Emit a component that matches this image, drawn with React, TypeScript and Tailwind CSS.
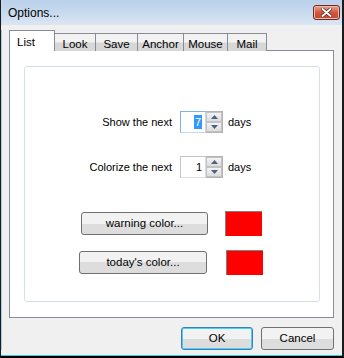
import React from "react";

const font = { fontFamily: '"Liberation Sans", Arial, sans-serif' };

function Spin({ value, focused }: { value: string; focused?: boolean }) {
  return (
    <div className="flex h-[22px]">
      <div
        className={`flex h-[22px] w-[26px] items-center justify-end border bg-white pr-[3px] ${
          focused ? "border-[#7eb4ea] border-r-[#c5d9ef] border-b-[#c5d9ef]" : "border-[#dbdbdb] border-l-[#c4c4c4] border-t-[#c4c4c4]"
        }`}
      >
        {focused ? (
          <span className="bg-[#3399ff] px-[1px] leading-[14px] text-white">{value}</span>
        ) : (
          <span className="leading-[14px] text-black">{value}</span>
        )}
      </div>
      <div className="flex w-[17px] flex-col border border-l-0 border-[#b3b3b3]">
        <div className="flex h-[10px] items-center justify-center border border-[#c3c3c3] bg-gradient-to-b from-[#f4f4f4] to-[#dcdcdc]">
          <svg width="7" height="4" viewBox="0 0 7 4">
            <path d="M3.5 0 L7 4 L0 4 Z" fill="#4d6185" />
          </svg>
        </div>
        <div className="flex h-[10px] items-center justify-center border border-[#c3c3c3] bg-gradient-to-b from-[#f4f4f4] to-[#dcdcdc]">
          <svg width="7" height="4" viewBox="0 0 7 4">
            <path d="M0 0 L7 0 L3.5 4 Z" fill="#4d6185" />
          </svg>
        </div>
      </div>
    </div>
  );
}

function Btn({ label, w, focus }: { label: string; w: string; focus?: boolean }) {
  return (
    <div
      className={`flex h-[23px] ${w} items-center justify-center rounded-[3px] border ${
        focus ? "border-[#3c7fb1] shadow-[inset_0_0_0_1px_#48d0f8]" : "border-[#707070]"
      } bg-gradient-to-b from-[#f2f2f2] from-50% to-[#dddddd] to-50% text-[11.5px] text-black`}
    >
      <span>{label}</span>
    </div>
  );
}

export default function App() {
  const tabs = ["Look", "Save", "Anchor", "Mouse", "Mail"];
  const tabW = ["w-[41px]", "w-[42px]", "w-[46px]", "w-[44px]", "w-[39px]"];
  return (
    <div
      className="relative h-[358px] w-[344px] overflow-hidden border-b-[2px] border-l border-r-[2px] border-[#1c1c1c] border-b-black bg-[#f0f0f0] text-[11px]"
      style={font}
    >
      {/* title bar */}
      <div className="flex h-[25px] items-start justify-between border-l border-[#c3d7ee] bg-gradient-to-b from-[#b9d1ea] via-[#c7daee] to-[#dbe6f3] pl-[6px]">
        <span className="mt-[6px] text-[12px] leading-[14px] text-black">Options...</span>
        <div className="mr-[2px] mt-[5px] flex h-[15px] w-[27px] items-center justify-center rounded-[3px] border border-[#6d2a23] bg-gradient-to-b from-[#e8a593] via-[#d1563d] to-[#c64630] shadow-[inset_0_0_0_1px_#f0b8a8]">
          <svg width="11" height="9" viewBox="0 0 11 9">
            <path d="M1.5 1 L9.5 8 M9.5 1 L1.5 8" stroke="#3a1a14" strokeWidth="3.2" strokeLinecap="round" />
            <path d="M1.5 1 L9.5 8 M9.5 1 L1.5 8" stroke="#ffffff" strokeWidth="2" strokeLinecap="round" />
          </svg>
        </div>
      </div>
      <div className="border-l border-[#a9c9ea] pl-[7px] pr-[7px]">
        {/* tabs */}
        <div className="relative z-10 mt-[5px] flex h-[21px] items-end">
          <div className="flex h-[21px] w-[46px] items-start border border-b-0 border-[#898c95] bg-white pl-[7px] pt-[3px] text-[11.5px] text-black">
            List
          </div>
          {tabs.map((t, i) => (
            <div
              key={t}
              className={`flex h-[18px] ${tabW[i]} items-start justify-center border border-b-0 border-l-0 border-[#898c95] bg-gradient-to-b from-[#f2f2f2] from-45% to-[#d7d7d7] to-55% pt-[2px] text-[11.5px] text-black`}
            >
              {t}
            </div>
          ))}
        </div>
        {/* panel */}
        <div className="-mt-[1px] h-[268px] w-[325px] border border-[#898c95] bg-white pl-[14px] pt-[15px]">
          <div className="h-[236px] w-[296px] rounded-[3px] border border-[#d5dfe5] pt-[44px]">
            <div className="flex h-[22px] items-center">
              <div className="w-[155px] pr-[8px] text-right">Show the next</div>
              <Spin value="7" focused />
              <span className="ml-[5px]">days</span>
            </div>
            <div className="mt-[23px] flex h-[22px] items-center">
              <div className="w-[155px] pr-[8px] text-right">Colorize the next</div>
              <Spin value="1" />
              <span className="ml-[5px]">days</span>
            </div>
            <div className="mt-[33px] flex h-[25px] items-center pl-[56px]">
              <Btn label="warning color..." w="w-[127px]" />
              <div className="ml-[17px] h-[25px] w-[37px] border-l border-t border-[#808080] bg-[#ff0000]" />
            </div>
            <div className="mt-[14px] flex h-[25px] items-center pl-[54px]">
              <Btn label="today's color..." w="w-[128px]" />
              <div className="ml-[19px] h-[25px] w-[37px] border-l border-t border-[#808080] bg-[#ff0000]" />
            </div>
          </div>
        </div>
        {/* bottom buttons */}
        <div className="mt-[9px] flex h-[23px] gap-[8px] pl-[172px]">
          <Btn label="OK" w="w-[72px]" focus />
          <Btn label="Cancel" w="w-[73px]" />
        </div>
      </div>
      <div className="absolute bottom-0 left-0 h-[1px] w-full bg-[#3fc8ea]" />
    </div>
  );
}
